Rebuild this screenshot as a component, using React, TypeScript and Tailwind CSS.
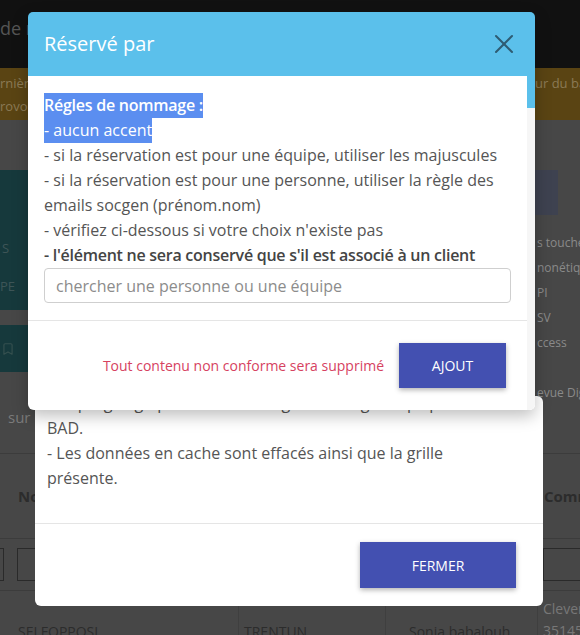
import { X, Bookmark } from 'lucide-react';

function Background() {
  return (
    <div className="flex flex-col">
      {/* barre du haut */}
      <div className="h-[68px] bg-[#111111] pt-[14px] text-[18px] leading-[28px] text-[#555] whitespace-nowrap">
        de mots réservés
      </div>

      {/* bandeau */}
      <div className="h-[52px] bg-[#5a4413] flex text-[13px] leading-[23px] text-[#8b7a55] whitespace-nowrap overflow-hidden">
        <div className="w-[28px] pt-[4px] overflow-hidden">
          <div>rnière</div>
          <div>rovoquer</div>
        </div>
        <div className="flex-1" />
        <div className="w-[45px] pt-[4px] overflow-hidden">ur du bandeau</div>
      </div>

      {/* contenu */}
      <div className="h-[285px] flex">
        <div className="w-[28px] pt-[50px] flex flex-col gap-[15px]">
          <div className="h-[140px] bg-[#16393c] flex flex-col text-[13px] text-[#3e5557] pt-[68px] leading-[20px]">
            <div className="pl-[2px]">S</div>
            <div className="pt-[18px]">PE</div>
          </div>
          <div className="h-[47px] bg-[#16393c] flex items-center pl-[1px] text-[#35504f]">
            <Bookmark size={14} strokeWidth={2} />
          </div>
        </div>
        <div className="flex-1" />
        <div className="w-[45px] pt-[50px] text-[12px] leading-[25px] text-[#8a8a8a] whitespace-nowrap overflow-hidden">
          <div className="w-[23px] h-[45px] bg-[#3e4250]" />
          <div className="pt-[15px] pl-[2px]">
            <div>s toucheront</div>
            <div>nonétique</div>
            <div>PI</div>
            <div>SV</div>
            <div>ccess</div>
            <div>&nbsp;</div>
            <div>evue Digitale</div>
          </div>
        </div>
      </div>

      <div className="h-[48px] pl-[8px] text-[15px] leading-[25px] text-[#7b7b7b]">sur</div>

      {/* tableau */}
      <div className="border-t border-[#3c3c3c] text-[14px] text-[#2c2c2c]">
        <div className="grid grid-cols-[10px_228px_147px_152px_43px] h-[85px] border-b border-[#3c3c3c]">
          <div />
          <div className="pl-[8px] flex items-center font-bold text-[15px]">Nom</div>
          <div className="border-l border-[#3f3f3f]" />
          <div className="border-l border-[#3f3f3f]" />
          <div className="border-l border-[#3f3f3f] pl-[6px] flex items-center font-bold text-[15px] whitespace-nowrap overflow-hidden">
            Commentaire
          </div>
        </div>
        <div className="grid grid-cols-[10px_228px_147px_152px_43px] h-[52px] border-b border-[#3c3c3c]">
          <div className="pt-[9px] -ml-[20px]">
            <div className="w-[24px] h-[33px] border border-[#2a2a2a]" />
          </div>
          <div className="pt-[9px] pl-[7px] pr-[8px]">
            <div className="h-[33px] border border-[#2a2a2a]" />
          </div>
          <div className="border-l border-[#3f3f3f]" />
          <div className="border-l border-[#3f3f3f]" />
          <div className="border-l border-[#3f3f3f] pt-[9px] pl-[5px]">
            <div className="h-[33px] border border-[#2a2a2a] border-r-0" />
          </div>
        </div>
        <div className="grid grid-cols-[10px_228px_147px_152px_43px] h-[60px] leading-[22px]">
          <div />
          <div className="pl-[8px] pt-[30px]">SELFOPPOSI</div>
          <div className="border-l border-[#3f3f3f] pl-[5px] pt-[30px]">TRENTUN</div>
          <div className="border-l border-[#3f3f3f] pl-[23px] pt-[30px] whitespace-nowrap">Sonia babalouh</div>
          <div className="border-l border-[#3f3f3f] pl-[5px] pt-[7px] text-[#777] whitespace-nowrap overflow-hidden">
            <div>Clever</div>
            <div>35145</div>
          </div>
        </div>
      </div>
    </div>
  );
}

function BehindModal() {
  // seule la partie basse dépasse sous la modale du dessus
  return (
    <div className="absolute left-[35px] top-[396px] w-[508px] h-[210px] bg-white rounded-[6px] flex flex-col overflow-hidden">
      <div className="flex-1 flex flex-col justify-end px-[12px] pb-[32px] text-[16px] leading-[25px] text-[#555] overflow-hidden">
        <div className="whitespace-nowrap">- La purge agit pour toutes les lignes de la grille qui pointent</div>
        <div>BAD.</div>
        <div>- Les données en cache sont effacés ainsi que la grille</div>
        <div>présente.</div>
      </div>
      <div className="border-t border-[#e5e5e5] h-[83px] shrink-0 pt-[18px] pr-[27px] flex justify-end items-start">
        <button className="w-[156px] h-[46px] bg-[#4350b1] text-white text-[14px] shadow-[0_2px_5px_rgba(0,0,0,0.3)]">
          FERMER
        </button>
      </div>
    </div>
  );
}

function FrontModal() {
  return (
    <div className="absolute left-[28px] top-[12px] w-[507px] flex flex-col rounded-[5px] shadow-[0_6px_16px_rgba(0,0,0,0.25)]">
      <div className="h-[64px] bg-[#5bc0eb] rounded-t-[5px] flex items-center justify-between pl-[16px] pr-[15px]">
        <span className="text-[20px] text-white">Réservé par</span>
        <X size={32} strokeWidth={1.5} className="text-[#2e5c73]" />
      </div>
      <div className="flex bg-white rounded-b-[6px]">
        <div className="w-[499px]">
          <div className="pt-[17px] px-[16px] pb-[17px] text-[16px] leading-[25px] text-[#555]">
            <div>
              <span className="inline-block bg-[#5b8ef0] text-white font-semibold tracking-[-0.25px]">Régles de nommage :</span>
            </div>
            <div>
              <span className="inline-block bg-[#5b8ef0] text-white">- aucun accent</span>
            </div>
            <div>- si la réservation est pour une équipe, utiliser les majuscules</div>
            <div>- si la réservation est pour une personne, utiliser la règle des emails socgen (prénom.nom)</div>
            <div>- vérifiez ci-dessous si votre choix n'existe pas</div>
            <div className="font-semibold text-[#444] tracking-[-0.26px]">- l'élément ne sera conservé que s'il est associé à un client</div>
            <input
              className="block w-full h-[35px] border border-[#cfcfcf] rounded-[4px] px-[11px] text-[16px] text-[#555] placeholder:text-[#8c8c8c] outline-none"
              placeholder="chercher une personne ou une équipe"
            />
          </div>
          <div className="border-t border-[#e5e5e5] pt-[22px] pb-[22px] pr-[21px] flex justify-end items-center gap-[15px]">
            <span className="text-[14px] text-[#d6425f]">Tout contenu non conforme sera supprimé</span>
            <button className="w-[107px] h-[45px] bg-[#4350b1] text-white text-[14px] shadow-[0_2px_5px_rgba(0,0,0,0.3)]">
              AJOUT
            </button>
          </div>
        </div>
        {/* barre de défilement */}
        <div className="w-[8px] bg-[#f6f6f6] rounded-br-[6px]">
          <div className="h-[32px] bg-[#5bc0eb]" />
        </div>
      </div>
    </div>
  );
}

export default function App() {
  return (
    <div className="relative w-[580px] h-[635px] overflow-hidden bg-[#474747] font-['Open_Sans',sans-serif]">
      <Background />
      <BehindModal />
      <FrontModal />
    </div>
  );
}
